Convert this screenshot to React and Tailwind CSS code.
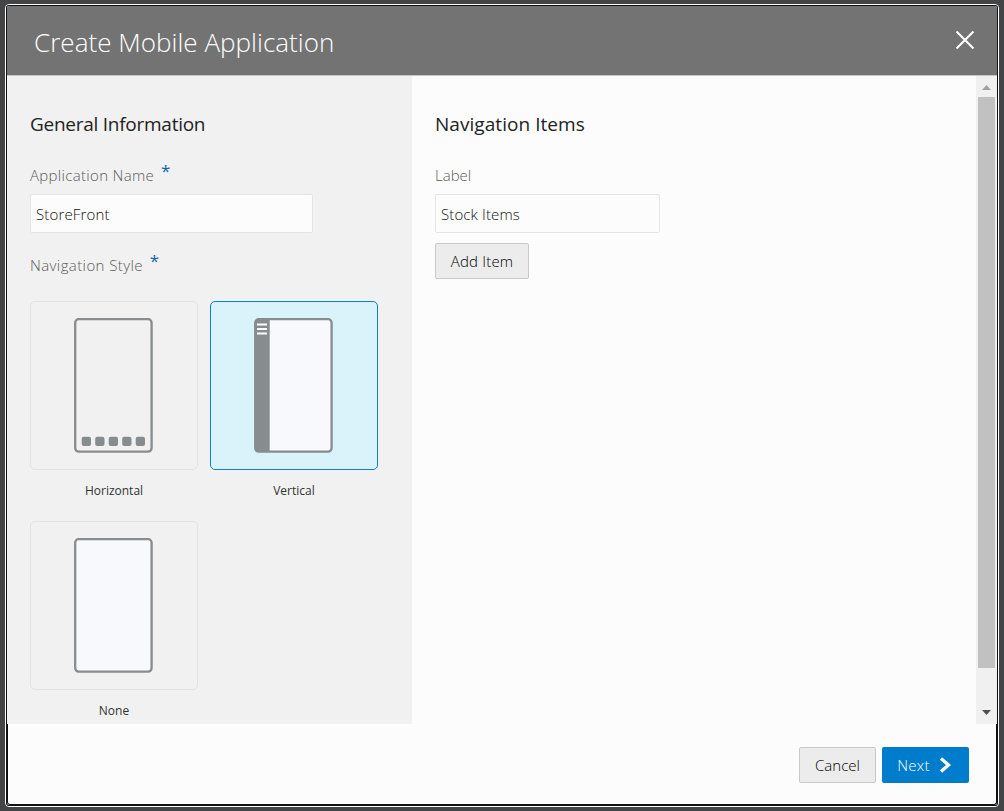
import React from 'react';

function Phone({ fill, children }) {
  return (
    <svg width="80" height="136" viewBox="0 0 80 136" className="block">
      <rect x="1.2" y="1.2" width="76.4" height="132.4" rx="3.5" fill={fill} stroke="#878c8e" strokeWidth="2.3" />
      {children}
    </svg>
  );
}

function StyleOption({ label, selected, children }) {
  return (
    <div className="flex w-[168px] flex-col">
      <div
        className={
          selected
            ? 'flex h-[169px] items-start justify-center rounded-[5px] border border-[#0a7fcb] bg-[#daf3fb] pt-4'
            : 'flex h-[169px] items-start justify-center rounded-[5px] border border-[#e2e2e2] bg-[#f1f1f1] pt-4'
        }
      >
        {children}
      </div>
      <div className="mt-[11px] h-5 text-center text-[12px] font-normal leading-5 text-[#333]">
        {label}
      </div>
    </div>
  );
}

function Required() {
  return <span className="ml-[7px] text-[17px] font-normal leading-3 text-[#0867a8]">*</span>;
}

export default function App() {
  return (
    <div className="h-[811px] w-[1004px] bg-[#434446] pl-[5px] pt-1 font-['Open_Sans','Noto_Sans',sans-serif] font-light">
      <div className="h-[803px] w-[994px] rounded-[4px] border border-white bg-[#111]">
        <div className="flex h-[801px] w-[992px] flex-col overflow-hidden rounded-[3px] border border-[#111] bg-[#fcfcfc]">
          <header className="flex h-[70px] shrink-0 justify-between border-b border-[#c6c6c6] bg-[#737373] pl-[27px] pr-[22px] text-white">
            <h1 className="mt-[18px] text-[26px] leading-9 tracking-[0.03px]">Create Mobile Application</h1>
            <svg width="20" height="20" viewBox="0 0 20 20" className="mt-6">
              <path d="M1.5 1.5 18.5 18.5M18.5 1.5 1.5 18.5" stroke="#fff" strokeWidth="2" fill="none" />
            </svg>
          </header>

          <main className="flex h-[648px] shrink-0">
            <section className="w-[405px] overflow-hidden bg-[#f1f1f1] pl-[23px] pt-[34px]">
              <h2 className="h-7 text-[19px] font-normal leading-7 tracking-[-0.26px] text-[#222]">
                General Information
              </h2>
              <div className="mt-[27px] flex h-5 text-[15px] leading-5 text-[#5a5a5a]">
                <span className="tracking-[0.32px]">Application Name</span>
                <Required />
              </div>
              <div className="mt-[9px] h-[39px] w-[283px] rounded-[2px] border border-[#e4e4e4] bg-[#fcfcfc] px-[5px] text-[15px] leading-[39px] tracking-[0.15px] text-[#111]">
                StoreFront
              </div>
              <div className="mt-[22px] flex h-5 text-[15px] leading-5 text-[#5a5a5a]">
                <span className="tracking-[0.4px]">Navigation Style</span>
                <Required />
              </div>
              <div className="mt-[26px] grid grid-cols-[168px_168px] gap-x-3 gap-y-5">
                <StyleOption label="Horizontal">
                  <Phone fill="none">
                    {[7.7, 21.2, 34.7, 48.2, 61.7].map((x) => (
                      <rect key={x} x={x} y="118.800" width="9.300" height="9.300" rx="2" fill="#878c8e" />
                    ))}
                  </Phone>
                </StyleOption>
                <StyleOption label="Vertical" selected>
                  <Phone fill="#f8f9fc">
                    <path d="M4 1H15.700V133.800H4Q1 133.800 1 131V4Q1 1 4 1Z" fill="#878c8e" />
                    <path d="M3 6.500H13M3 11H13M3 15.500H13" stroke="#fff" strokeWidth="2.2" />
                  </Phone>
                </StyleOption>
                <StyleOption label="None">
                  <Phone fill="#f8f9fc" />
                </StyleOption>
              </div>
            </section>

            <section className="flex-1 pl-[23px] pt-[34px]">
              <h2 className="h-7 text-[19px] font-normal leading-7 tracking-[0.05px] text-[#222]">
                Navigation Items
              </h2>
              <div className="mt-[27px] h-5 text-[15px] leading-5 text-[#5a5a5a]">
                Label
              </div>
              <div className="mt-[9px] h-[39px] w-[225px] rounded-[2px] border border-[#e4e4e4] bg-[#fcfcfc] px-[5px] text-[15px] leading-[39px] tracking-[0.12px] text-[#111]">
                Stock Items
              </div>
              <button className="mt-[10px] flex h-9 w-[94px] items-center justify-center rounded-[2px] border border-[#c8c8c8] bg-[#ececec] text-[15px] tracking-[0.2px] text-black">
                Add Item
              </button>
            </section>

            <div className="flex w-[21px] flex-col items-center bg-[#f0f0f0]">
              <svg width="9" height="5" viewBox="0 0 9 5" className="mt-[9px]">
                <path d="M0 5 4.500 0 9 5Z" fill="#a0a0a0" />
              </svg>
              <div className="mt-[7px] h-[571px] w-[17px] bg-[#c1c1c1]" />
              <svg width="9" height="5" viewBox="0 0 9 5" className="mt-[42px]">
                <path d="M0 0 4.500 5 9 0Z" fill="#505050" />
              </svg>
            </div>
          </main>

          <footer className="flex flex-1 items-start justify-end gap-1.5 rounded-b-[3px] border-x border-b border-[#111] pr-[27px] pt-[23px] text-[15px]">
            <button className="flex h-9 w-[77px] items-center justify-center rounded-[2px] border border-[#c8c8c8] bg-[#ececec] text-black">
              Cancel
            </button>
            <button className="flex h-9 w-[87px] items-center rounded-[2px] bg-[#007ccc] pl-[15px] text-white">
              <span className="w-[33px] tracking-[0.2px]">Next</span>
              <svg width="13" height="16" viewBox="0 0 13 16" className="ml-[9px]">
                <path d="M2 1.500 9.500 8 2 14.500" stroke="#fff" strokeWidth="3.3" fill="none" />
              </svg>
            </button>
          </footer>
        </div>
      </div>
    </div>
  );
}
